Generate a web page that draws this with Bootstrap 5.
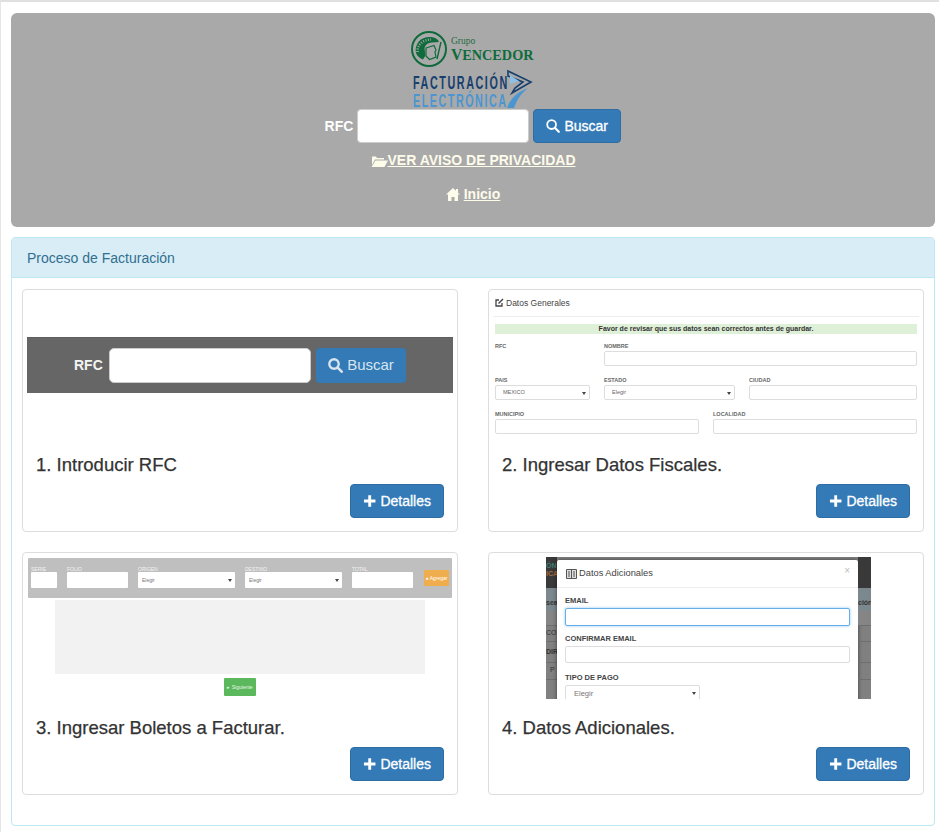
<!DOCTYPE html>
<html lang="es">
<head>
    <meta charset="UTF-8">
    <meta name="viewport" content="width=device-width, initial-scale=1.0">
    <title>Proceso de Facturación</title>
    <link rel="stylesheet" href="https://cdn.jsdelivr.net/npm/bootstrap@5.3.0/dist/css/bootstrap.min.css">
    <script src="https://cdn.jsdelivr.net/npm/bootstrap@5.3.0/dist/js/bootstrap.bundle.min.js"></script>
    <style>
        body {
            font-family: "Liberation Sans", Arial, sans-serif;
            font-size: 14px;
            color: #333;
            background: #fff;
            border-top: 2px solid #e0e0e0;
            border-left: 1px solid #e6e6e6;
            padding: 11px 4px 0 10px;
            height: 832px;
            overflow: hidden;
        }

        .hero-box {
            height: 214px;
            background: #a9a9a9;
            border-radius: 6px;
            padding-top: 18px;
            margin-bottom: 10px;
        }

        .logo-art { display: block; margin: 0 auto -2px; }

        .rfc-label { color: #fff; font-weight: bold; }

        .rfc-input {
            width: 172px;
            height: 34px;
            background: #fff;
            border: 1px solid #ccc;
            border-radius: 4px;
        }

        .btn-blue {
            background: #337ab7;
            border: 1px solid #2e6da4;
            color: #fff;
            font-size: 14px;
            font-weight: 500;
            -webkit-text-stroke: .3px #fff;
            height: 34px;
            padding: 0 12px;
            border-radius: 4px;
            display: inline-flex;
            align-items: center;
            gap: 4px;
        }

        .btn-blue:hover { background: #286090; color: #fff; }

        .btn-find { width: 88px; }

        .hero-link {
            color: #fdfbe9;
            font-weight: bold;
            display: inline-flex;
            align-items: center;
            line-height: 20px;
        }

        .hero-link:hover { color: #fff; }

        .link-row-a { margin-top: 7px; height: 20px; }
        .link-row-b { margin-top: 14px; height: 20px; }

        .proc-panel {
            height: 589px;
            border: 1px solid #bce8f1;
            border-radius: 4px;
        }

        .proc-head {
            height: 40px;
            padding: 0 15px;
            background: #d9edf7;
            border-bottom: 1px solid #bce8f1;
            color: #31708f;
            line-height: 41px;
            border-radius: 3px 3px 0 0;
        }

        .step-grid {
            display: grid;
            grid-template-columns: 436px 436px;
            column-gap: 30px;
            row-gap: 20px;
            padding: 11px 10px 0;
        }

        .step-card {
            height: 243px;
            background: #fff;
            border: 1px solid #ddd;
            border-radius: 4px;
            padding: 4px;
        }

        .step-thumb { height: 142px; overflow: hidden; }

        .step-text { padding: 0 9px; }

        .step-text h3 {
            font-size: 18.5px;
            font-weight: 500;
            -webkit-text-stroke: .25px #333;
            color: #333;
            margin: 0;
            padding-top: 18px;
            height: 48px;
            line-height: 22px;
        }

        .step-text .btn-blue { width: 94px; padding: 0 12px; }

        /* miniatura 1 */
        .t1-band {
            height: 56px;
            margin-top: 43px;
            background: #666;
            display: flex;
            align-items: center;
            padding-left: 47px;
            border-top: 1px solid #5f5f5f;
        }

        .t1-label { color: #f4f4f4; font-weight: bold; width: 35px; font-size: 14px; }

        .t1-input {
            width: 202px;
            height: 35px;
            background: #fff;
            border: 1px solid #ccc;
            border-radius: 5px;
            margin-right: 5px;
        }

        .t1-btn {
            width: 90px;
            height: 35px;
            background: #337ab7;
            color: #d8e4ee;
            border-radius: 4px;
            display: flex;
            align-items: center;
            justify-content: center;
            gap: 4px;
            font-size: 15px;
        }

        /* miniatura 2 */
        .t2-wrap { color: #444; }

        .t2-title {
            height: 23px;
            padding: 2px 0 7px 2px;
            font-size: 8.5px;
            line-height: 12px;
            border-bottom: 1px solid #eee;
            margin-bottom: 7px;
            display: flex;
            align-items: center;
            gap: 2px;
        }

        .t2-note {
            margin: 0 2px 8px;
            height: 10px;
            background: #dff0d8;
            font-size: 7px;
            font-weight: bold;
            line-height: 10px;
            text-align: center;
            color: #333;
        }

        .t2-row { display: flex; gap: 14px; margin: 0 2px 10px; height: 24px; }

        .t2-col { flex: none; }

        .t2-col span { display: block; height: 9px; font-size: 5.5px; line-height: 9px; font-weight: bold; color: #666; }

        .t2-box {
            height: 15px;
            background: #fff;
            border: 1px solid #ddd;
            border-radius: 2px;
            font-size: 5.5px;
            line-height: 13px;
            padding-left: 7px;
            color: #666;
            position: relative;
        }

        .drop-mark::after {
            content: "";
            position: absolute;
            right: 3px;
            top: 6px;
            border: 2px solid transparent;
            border-top: 3px solid #444;
            border-bottom: 0;
        }

        /* miniatura 3 */
        .t3-band {
            margin: 1px 1px 2px;
            height: 40px;
            background: #bfbfbf;
            border-radius: 1px;
            display: flex;
            padding: 8px 0 0 3px;
            gap: 10px;
        }

        .t3-col span { display: block; height: 6px; color: #f3f3f3; font-size: 5px; line-height: 6px; }

        .t3-box {
            height: 16px;
            background: #fff;
            border-radius: 1px;
            font-size: 5px;
            line-height: 16px;
            padding-left: 4px;
            color: #777;
            position: relative;
        }

        .t3-box.drop-mark::after { top: 7px; }

        .t3-orange {
            width: 25px;
            height: 16px;
            margin: 4px 0 0 1px;
            background: #f0ad4e;
            color: #fff;
            font-size: 5px;
            line-height: 16px;
            text-align: center;
            border-radius: 1px;
        }

        .t3-gray { width: 370px; height: 74px; margin: 0 auto 4px; background: #f3f2f2; }

        .t3-green {
            width: 32px;
            height: 18px;
            margin: 0 auto;
            background: #5cb85c;
            color: #e8f5e8;
            font-size: 5px;
            line-height: 18px;
            text-align: center;
            border-radius: 1px;
        }

        /* miniatura 4 */
        .t4-shot {
            width: 325px;
            height: 142px;
            margin-left: 53px;
            background: #808080;
            display: flex;
            overflow: hidden;
        }

        .t4-side { width: 11px; flex: none; font-size: 7px; font-weight: bold; color: #333; overflow: hidden; }

        .t4-side.grow { flex: 1; }

        .t4-dark { height: 31px; background: #393939; font-size: 7px; line-height: 8px; padding-top: 5px; white-space: nowrap; }

        .t4-teal { color: #3f7f74; }
        .t4-amber { color: #a9683a; }

        .t4-cell { border-bottom: 1px solid #6e6e6e; white-space: nowrap; }

        .t4-first { height: 38px; line-height: 30px; background: linear-gradient(#7b888d 0, #7b888d 62%, #858585 62%); }

        .t4-modal {
            width: 301px;
            flex: none;
            height: 145px;
            margin-top: 3px;
            background: #fff;
            border-radius: 2px 2px 0 0;
            box-shadow: 0 0 4px rgba(0, 0, 0, .5);
            padding: 0 8px;
        }

        .t4-head {
            height: 28px;
            margin: 0 -8px 7px;
            padding: 0 8px 0 9px;
            border-bottom: 1px solid #eee;
            font-size: 9.3px;
            color: #444;
            display: flex;
            align-items: center;
            gap: 2px;
        }

        .t4-head em { margin-left: auto; font-style: normal; color: #bbb; font-size: 10px; margin-top: -6px; }

        .t4-modal label { display: block; height: 13px; font-size: 7.5px; line-height: 11px; font-weight: bold; color: #444; margin: 0; }

        .t4-box {
            height: 17px;
            border: 1px solid #ddd;
            border-radius: 2px;
            margin-bottom: 9px;
            background: #fff;
            position: relative;
            font-size: 7.5px;
            line-height: 15px;
            padding-left: 8px;
            color: #777;
        }

        .t4-box.on { height: 18px; border-color: #66afe9; box-shadow: 0 0 3px rgba(102, 175, 233, .7); margin-bottom: 7px; }

        .t4-box.short { width: 135px; }
    </style>
</head>
<body>

<div class="hero-box text-center">
    <svg class="logo-art" width="126" height="80" viewBox="0 0 126 80" role="img" aria-label="Grupo Vencedor">
        <circle cx="19" cy="18" r="17" fill="none" stroke="#0f6b3c" stroke-width="2"/>
        <path d="M6 22C4 12 12 5 21 6c4 .5 7 2 8 5l-7 .5c-5 .500-7 3-7.500 6l1 7-2.500 4c-3-1-6-3.500-7-6.500z" fill="#0f6b3c"/>
        <path d="M7.500 21C7 14 13 8.500 21 8.500" fill="none" stroke="#a9a9a9" stroke-width="2.500" stroke-dasharray="1 1.500"/>
        <path d="M16 17l8-2.500 2 4.500-1 2 1 5-6.500 2.500-3.500-3.500z" fill="none" stroke="#0f6b3c" stroke-width="1.200"/>
        <path d="M31 11l-4 17" stroke="#0f6b3c" stroke-width="1.400"/>
        <text x="41" y="12.500" font-family="Liberation Serif, serif" font-size="9.500" fill="#1f6b3f">Grupo</text>
        <text transform="translate(41 29) scale(.95 1)" font-family="Liberation Serif, serif" font-size="16.500" font-weight="bold" fill="#0f6b3c">V<tspan font-size="15">ENCEDOR</tspan></text>
        <text transform="translate(3 58) scale(.6 1)" font-family="Liberation Sans, sans-serif" font-size="18" font-weight="bold" fill="#17406d" textLength="157" lengthAdjust="spacing">FACTURACIÓN</text>
        <text transform="translate(3 76) scale(.6 1)" font-family="Liberation Sans, sans-serif" font-size="18" font-weight="bold" fill="#4b96d1" textLength="155" lengthAdjust="spacing">ELECTRÓNICA</text>
        <path d="M98 40l23 11-19 11 3-5 8-6-15-6z" fill="none" stroke="#17406d" stroke-width="1.600"/>
        <path d="M100 44l9 6-9 3z" fill="#8fbfe3"/>
        <path d="M97 77c3-9 10-16 21-20-6 5-10 9-14 20z" fill="#4b96d1"/>
    </svg>
    <div class="d-flex justify-content-center align-items-center">
        <label class="rfc-label me-1" for="rfc">RFC</label>
        <input class="rfc-input me-1" id="rfc" type="text">
        <a class="btn-blue btn-find text-decoration-none" href="#">
            <svg width="14" height="14" viewBox="0 0 14 14"><circle cx="5.600" cy="5.600" r="4.400" fill="none" stroke="#fff" stroke-width="1.800"/><path d="M8.800 8.800l4 4" stroke="#fff" stroke-width="2.200" stroke-linecap="round"/></svg>
            Buscar
        </a>
    </div>
    <div class="link-row-a">
        <a class="hero-link" href="#">
            <svg width="17" height="13" viewBox="0 0 17 13"><path d="M1 2.500h4l1 1.500h7v1.500H4L1 11z" fill="#fdfbe9"/><path d="M4.500 6.500H17L13.500 13H.5z" fill="#fdfbe9"/></svg>
            VER AVISO DE PRIVACIDAD
        </a>
    </div>
    <div class="link-row-b">
        <a class="hero-link" href="#">
            <svg width="14" height="13" viewBox="0 0 14 13"><path d="M7 0l3 2.800V1h2v3.700L14 6.500h-2V13H8.500V9h-3v4H2V6.500H0z" fill="#fdfbe9"/></svg>
            <span class="ms-1">Inicio</span>
        </a>
    </div>
</div>

<div class="proc-panel">
    <div class="proc-head">Proceso de Facturación</div>
    <div class="step-grid">

        <div class="step-card">
            <div class="step-thumb">
                <div class="t1-band">
                    <span class="t1-label">RFC</span>
                    <span class="t1-input"></span>
                    <span class="t1-btn">
                        <svg width="15" height="15" viewBox="0 0 14 14"><circle cx="5.600" cy="5.600" r="4.400" fill="none" stroke="#d8e4ee" stroke-width="2.200"/><path d="M8.800 8.800l4 4" stroke="#d8e4ee" stroke-width="2.400" stroke-linecap="round"/></svg>
                        Buscar
                    </span>
                </div>
            </div>
            <div class="step-text">
                <h3>1. Introducir RFC</h3>
                <div class="text-end">
                    <a class="btn-blue text-decoration-none" href="#"><svg width="14" height="14" viewBox="0 0 14 14"><path d="M5.500 1h3v4.500H13v3H8.500V13h-3V8.500H1v-3h4.500z" fill="#fff"/></svg>Detalles</a>
                </div>
            </div>
        </div>

        <div class="step-card">
            <div class="step-thumb t2-wrap">
                <div class="t2-title">
                    <svg width="9" height="9" viewBox="0 0 9 9"><path d="M7 5v3H1V2h3" fill="none" stroke="#444" stroke-width="1.300"/><path d="M3.500 5.500L8 1" stroke="#444" stroke-width="1.500"/></svg>
                    Datos Generales
                </div>
                <div class="t2-note">Favor de revisar que sus datos sean correctos antes de guardar.</div>
                <div class="t2-row">
                    <div class="t2-col" style="width: 95px"><span>RFC</span></div>
                    <div class="t2-col" style="width: 313px"><span>NOMBRE</span><div class="t2-box"></div></div>
                </div>
                <div class="t2-row">
                    <div class="t2-col" style="width: 95px"><span>PAIS</span><div class="t2-box drop-mark">MEXICO</div></div>
                    <div class="t2-col" style="width: 131px"><span>ESTADO</span><div class="t2-box drop-mark">Elegir</div></div>
                    <div class="t2-col" style="width: 168px"><span>CIUDAD</span><div class="t2-box"></div></div>
                </div>
                <div class="t2-row">
                    <div class="t2-col" style="width: 204px"><span>MUNICIPIO</span><div class="t2-box"></div></div>
                    <div class="t2-col" style="width: 204px"><span>LOCALIDAD</span><div class="t2-box"></div></div>
                </div>
            </div>
            <div class="step-text">
                <h3>2. Ingresar Datos Fiscales.</h3>
                <div class="text-end">
                    <a class="btn-blue text-decoration-none" href="#"><svg width="14" height="14" viewBox="0 0 14 14"><path d="M5.500 1h3v4.500H13v3H8.500V13h-3V8.500H1v-3h4.500z" fill="#fff"/></svg>Detalles</a>
                </div>
            </div>
        </div>

        <div class="step-card">
            <div class="step-thumb">
                <div class="t3-band">
                    <div class="t3-col" style="width: 26px"><span>SERIE</span><div class="t3-box"></div></div>
                    <div class="t3-col" style="width: 61px"><span>FOLIO</span><div class="t3-box"></div></div>
                    <div class="t3-col" style="width: 97px"><span>ORIGEN</span><div class="t3-box drop-mark">Elegir</div></div>
                    <div class="t3-col" style="width: 97px"><span>DESTINO</span><div class="t3-box drop-mark">Elegir</div></div>
                    <div class="t3-col" style="width: 61px"><span>TOTAL</span><div class="t3-box"></div></div>
                    <div class="t3-orange">● Agregar</div>
                </div>
                <div class="t3-gray"></div>
                <div class="t3-green">▸ Siguiente</div>
            </div>
            <div class="step-text">
                <h3>3. Ingresar Boletos a Facturar.</h3>
                <div class="text-end">
                    <a class="btn-blue text-decoration-none" href="#"><svg width="14" height="14" viewBox="0 0 14 14"><path d="M5.500 1h3v4.500H13v3H8.500V13h-3V8.500H1v-3h4.500z" fill="#fff"/></svg>Detalles</a>
                </div>
            </div>
        </div>

        <div class="step-card">
            <div class="step-thumb">
                <div class="t4-shot">
                    <div class="t4-side">
                        <div class="t4-dark"><div class="t4-teal">ÓN</div><div class="t4-amber">ICA</div></div>
                        <div class="t4-cell t4-first text-end">sea</div>
                        <div class="t4-cell" style="height: 16px; line-height: 14px; font-weight: normal">CO</div>
                        <div class="t4-cell text-end" style="height: 21px; line-height: 20px">DIR</div>
                        <div class="t4-cell" style="height: 17px; line-height: 14px; font-weight: normal">&nbsp;&nbsp;P</div>
                    </div>
                    <div class="t4-modal">
                        <div class="t4-head">
                            <svg width="11" height="10" viewBox="0 0 11 10"><path d="M.5.5h10v9H.5zM5.500.5v9M2 3h2M2 5h2M2 7h2M7 3h2M7 5h2M7 7h2" fill="#ddd" stroke="#555"/></svg>
                            Datos Adicionales
                            <em>×</em>
                        </div>
                        <label>EMAIL</label>
                        <div class="t4-box on"></div>
                        <label>CONFIRMAR EMAIL</label>
                        <div class="t4-box"></div>
                        <label>TIPO DE PAGO</label>
                        <div class="t4-box short drop-mark">Elegir</div>
                    </div>
                    <div class="t4-side grow">
                        <div class="t4-dark"></div>
                        <div class="t4-cell t4-first">ción</div>
                        <div class="t4-cell" style="height: 16px"></div>
                        <div class="t4-cell" style="height: 21px"></div>
                        <div class="t4-cell" style="height: 17px"></div>
                    </div>
                </div>
            </div>
            <div class="step-text">
                <h3>4. Datos Adicionales.</h3>
                <div class="text-end">
                    <a class="btn-blue text-decoration-none" href="#"><svg width="14" height="14" viewBox="0 0 14 14"><path d="M5.500 1h3v4.500H13v3H8.500V13h-3V8.500H1v-3h4.500z" fill="#fff"/></svg>Detalles</a>
                </div>
            </div>
        </div>

    </div>
</div>

</body>
</html>
